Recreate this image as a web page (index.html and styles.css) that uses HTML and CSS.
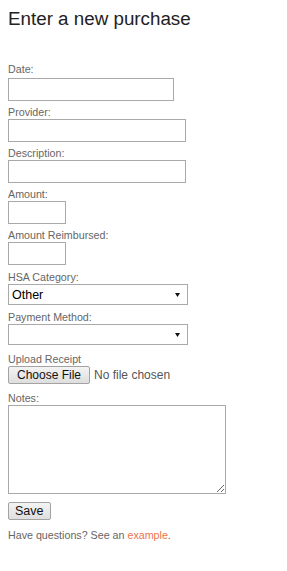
FILE: index.html
```html
<!DOCTYPE html>
<html lang="en">
<head>
    <meta charset="UTF-8">
    <meta name="viewport" content="width=device-width, initial-scale=1.0">
    <title>Enter a new purchase</title>
    <link rel="stylesheet" href="styles.css">
</head>
<body>
    <div class="container">
        <h1 class="title">Enter a new purchase</h1>
        <form class="purchase-form">
            <label for="date">Date:</label>
            <input type="text" id="date" class="field field-date">

            <label for="provider">Provider:</label>
            <input type="text" id="provider" class="field field-wide">

            <label for="description">Description:</label>
            <input type="text" id="description" class="field field-wide">

            <label for="amount">Amount:</label>
            <input type="text" id="amount" class="field field-small">

            <label for="reimbursed">Amount Reimbursed:</label>
            <input type="text" id="reimbursed" class="field field-small">

            <label for="category" class="label-select">HSA Category:</label>
            <div class="select-wrap">
                <select id="category" class="select">
                    <option>Other</option>
                </select>
                <svg class="select-arrow" width="5" height="4" viewBox="0 0 5 4"><path d="M0 0H5L2.5 4Z" fill="#111"/></svg>
            </div>

            <label for="payment" class="label-select">Payment Method:</label>
            <div class="select-wrap">
                <select id="payment" class="select">
                    <option></option>
                </select>
                <svg class="select-arrow" width="5" height="4" viewBox="0 0 5 4"><path d="M0 0H5L2.5 4Z" fill="#111"/></svg>
            </div>

            <label for="receipt" class="label-file">Upload Receipt</label>
            <input type="file" id="receipt" class="file">

            <label for="notes" class="label-notes">Notes:</label>
            <textarea id="notes" class="notes"></textarea>

            <button type="submit" class="save">Save</button>
        </form>
        <p class="help">Have questions? See an <a href="#">example</a>.</p>
    </div>
</body>
</html>
```

FILE: styles.css
```css
body {
    font-family: "Liberation Sans", Arial, sans-serif;
    background-color: #ffffff;
    margin: 0;
    padding: 0;
}

.container {
    padding: 8px;
}

.title {
    font-size: 18.8px;
    font-weight: normal;
    color: #222;
    margin: 0 0 30px 0;
}

.purchase-form label {
    display: block;
    font-size: 10.7px;
    line-height: 14px;
    padding-top: 4px;
    color: #666;
}

.purchase-form label:first-child {
    padding-top: 0;
    line-height: 18px;
}

.field {
    display: block;
    box-sizing: border-box;
    height: 23px;
    border: 1px solid #a9a9a9;
    border-radius: 0;
    margin: 0;
    padding: 2px 3px;
    font-family: "Liberation Sans", Arial, sans-serif;
    font-size: 12px;
}

.field-date {
    width: 166px;
}

.field-wide {
    width: 178px;
}

.field-small {
    width: 58px;
}

.purchase-form .label-select {
    padding-top: 5px;
}

.select-wrap {
    position: relative;
    width: 180px;
}

.select {
    display: block;
    box-sizing: border-box;
    width: 180px;
    height: 21px;
    margin: 0;
    padding: 0 3px;
    border: 1px solid #a9a9a9;
    border-radius: 0;
    background: #fff;
    color: #000;
    font-family: "Liberation Sans", Arial, sans-serif;
    font-size: 12.5px;
    appearance: none;
    -webkit-appearance: none;
}

.select-arrow {
    position: absolute;
    right: 8px;
    top: 9px;
}

.purchase-form .label-file {
    padding-top: 7px;
}

.file {
    display: block;
    margin: 0;
    font-family: "Liberation Sans", Arial, sans-serif;
    font-size: 12px;
    color: #555;
}

.file::file-selector-button {
    box-sizing: border-box;
    height: 18px;
    margin: 0 4px 0 0;
    padding: 0 8px;
    border: 1px solid #a3a3a3;
    border-radius: 2px;
    background: linear-gradient(#f4f4f4, #dedede);
    color: #111;
    font-family: "Liberation Sans", Arial, sans-serif;
    font-size: 12px;
}

.purchase-form .label-notes {
    padding-top: 7px;
}

.notes {
    display: block;
    box-sizing: border-box;
    width: 218px;
    height: 89px;
    margin: 0;
    border: 1px solid #a9a9a9;
    border-radius: 0;
}

.save {
    display: block;
    box-sizing: border-box;
    height: 18px;
    margin-top: 8px;
    padding: 0 6px;
    border: 1px solid #a3a3a3;
    border-radius: 2px;
    background: linear-gradient(#f4f4f4, #dedede);
    color: #111;
    font-family: "Liberation Sans", Arial, sans-serif;
    font-size: 12.5px;
}

.help {
    margin: 9px 0 0 0;
    font-size: 10.7px;
    color: #666;
}

.help a {
    color: #ec7350;
    text-decoration: none;
}
```
